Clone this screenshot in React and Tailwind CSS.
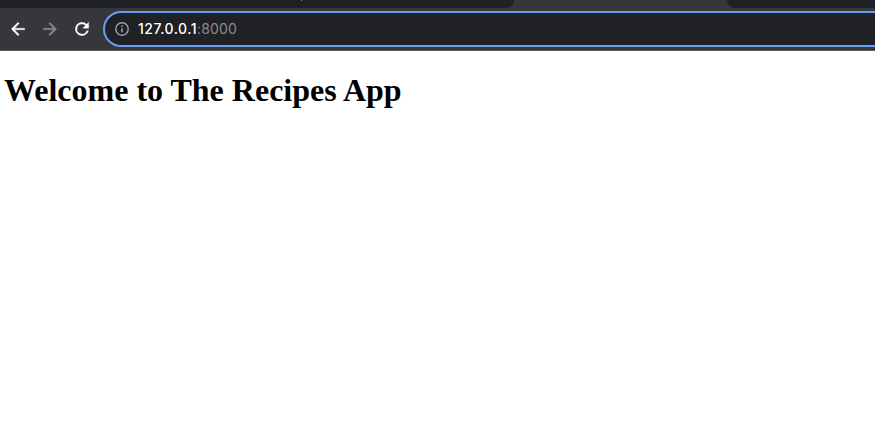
function ArrowIcon({ className }) {
  return (
    <svg viewBox="0 0 24 24" fill="currentColor" stroke="currentColor" strokeWidth="0.4" className={className} aria-hidden="true">
      <path d="M20 11H7.83l5.59-5.59L12 4l-8 8 8 8 1.41-1.41L7.83 13H20v-2z" />
    </svg>
  );
}

function ReloadIcon({ className }) {
  return (
    <svg viewBox="0 0 24 24" fill="currentColor" stroke="currentColor" strokeWidth="0.4" className={className} aria-hidden="true">
      <path d="M17.65 6.35A7.96 7.96 0 0 0 12 4a8 8 0 1 0 7.73 10h-2.08A6 6 0 1 1 12 6c1.66 0 3.14.69 4.22 1.78L13 11h7V4l-2.35 2.35z" />
    </svg>
  );
}

function InfoIcon({ className }) {
  return (
    <svg viewBox="0 0 14 14" fill="none" stroke="currentColor" className={className} aria-hidden="true">
      <circle cx="7" cy="7" r="6.2" strokeWidth="1.4" />
      <path d="M7 6.2v4.1M7 3.5v1.5" strokeWidth="1.6" />
    </svg>
  );
}

function TabStrip() {
  return (
    <div className="flex h-2 bg-[#36373a]">
      <div className="w-[514px] rounded-br-lg bg-[#202124]">
        <div className="ml-[301px] h-px w-px bg-[#77787b]" />
      </div>
      <div className="w-[213px]" />
      <div className="flex-1 rounded-bl-lg bg-[#202124]" />
    </div>
  );
}

function Toolbar() {
  return (
    <div className="flex h-[43px] items-start overflow-hidden border-b border-[#55565a] bg-[#36373a] pt-[3px]">
      <div className="flex h-9 w-[103px] shrink-0 items-center gap-3 pl-2">
        <ArrowIcon className="size-5 shrink-0 text-white" />
        <ArrowIcon className="size-5 shrink-0 rotate-180 text-[#88898b]" />
        <ReloadIcon className="size-5 shrink-0 text-white" />
      </div>
      <div className="flex h-9 flex-1 items-center rounded-l-full border-2 border-r-0 border-[#669df6] bg-[#202124] pl-[10px]">
        <InfoIcon className="size-[14px] shrink-0 text-[#9aa0a6]" />
        <span className="ml-[9px] whitespace-nowrap font-[Inter,sans-serif] text-[14px] leading-5 tracking-[0.15px] text-[#8b8c8e]">
          <span className="font-medium tracking-[0.5px] text-white">127.0.0.1</span>:8000
        </span>
      </div>
    </div>
  );
}

export default function App() {
  return (
    <div className="h-[446px] w-[875px] overflow-hidden bg-white">
      <TabStrip />
      <Toolbar />
      <main className="pl-[4px] pt-[21px]">
        <h1 className="whitespace-nowrap font-['Liberation_Serif',serif] text-[32px] font-bold leading-[37px] text-black">
          Welcome to The Recipes App
        </h1>
      </main>
    </div>
  );
}
